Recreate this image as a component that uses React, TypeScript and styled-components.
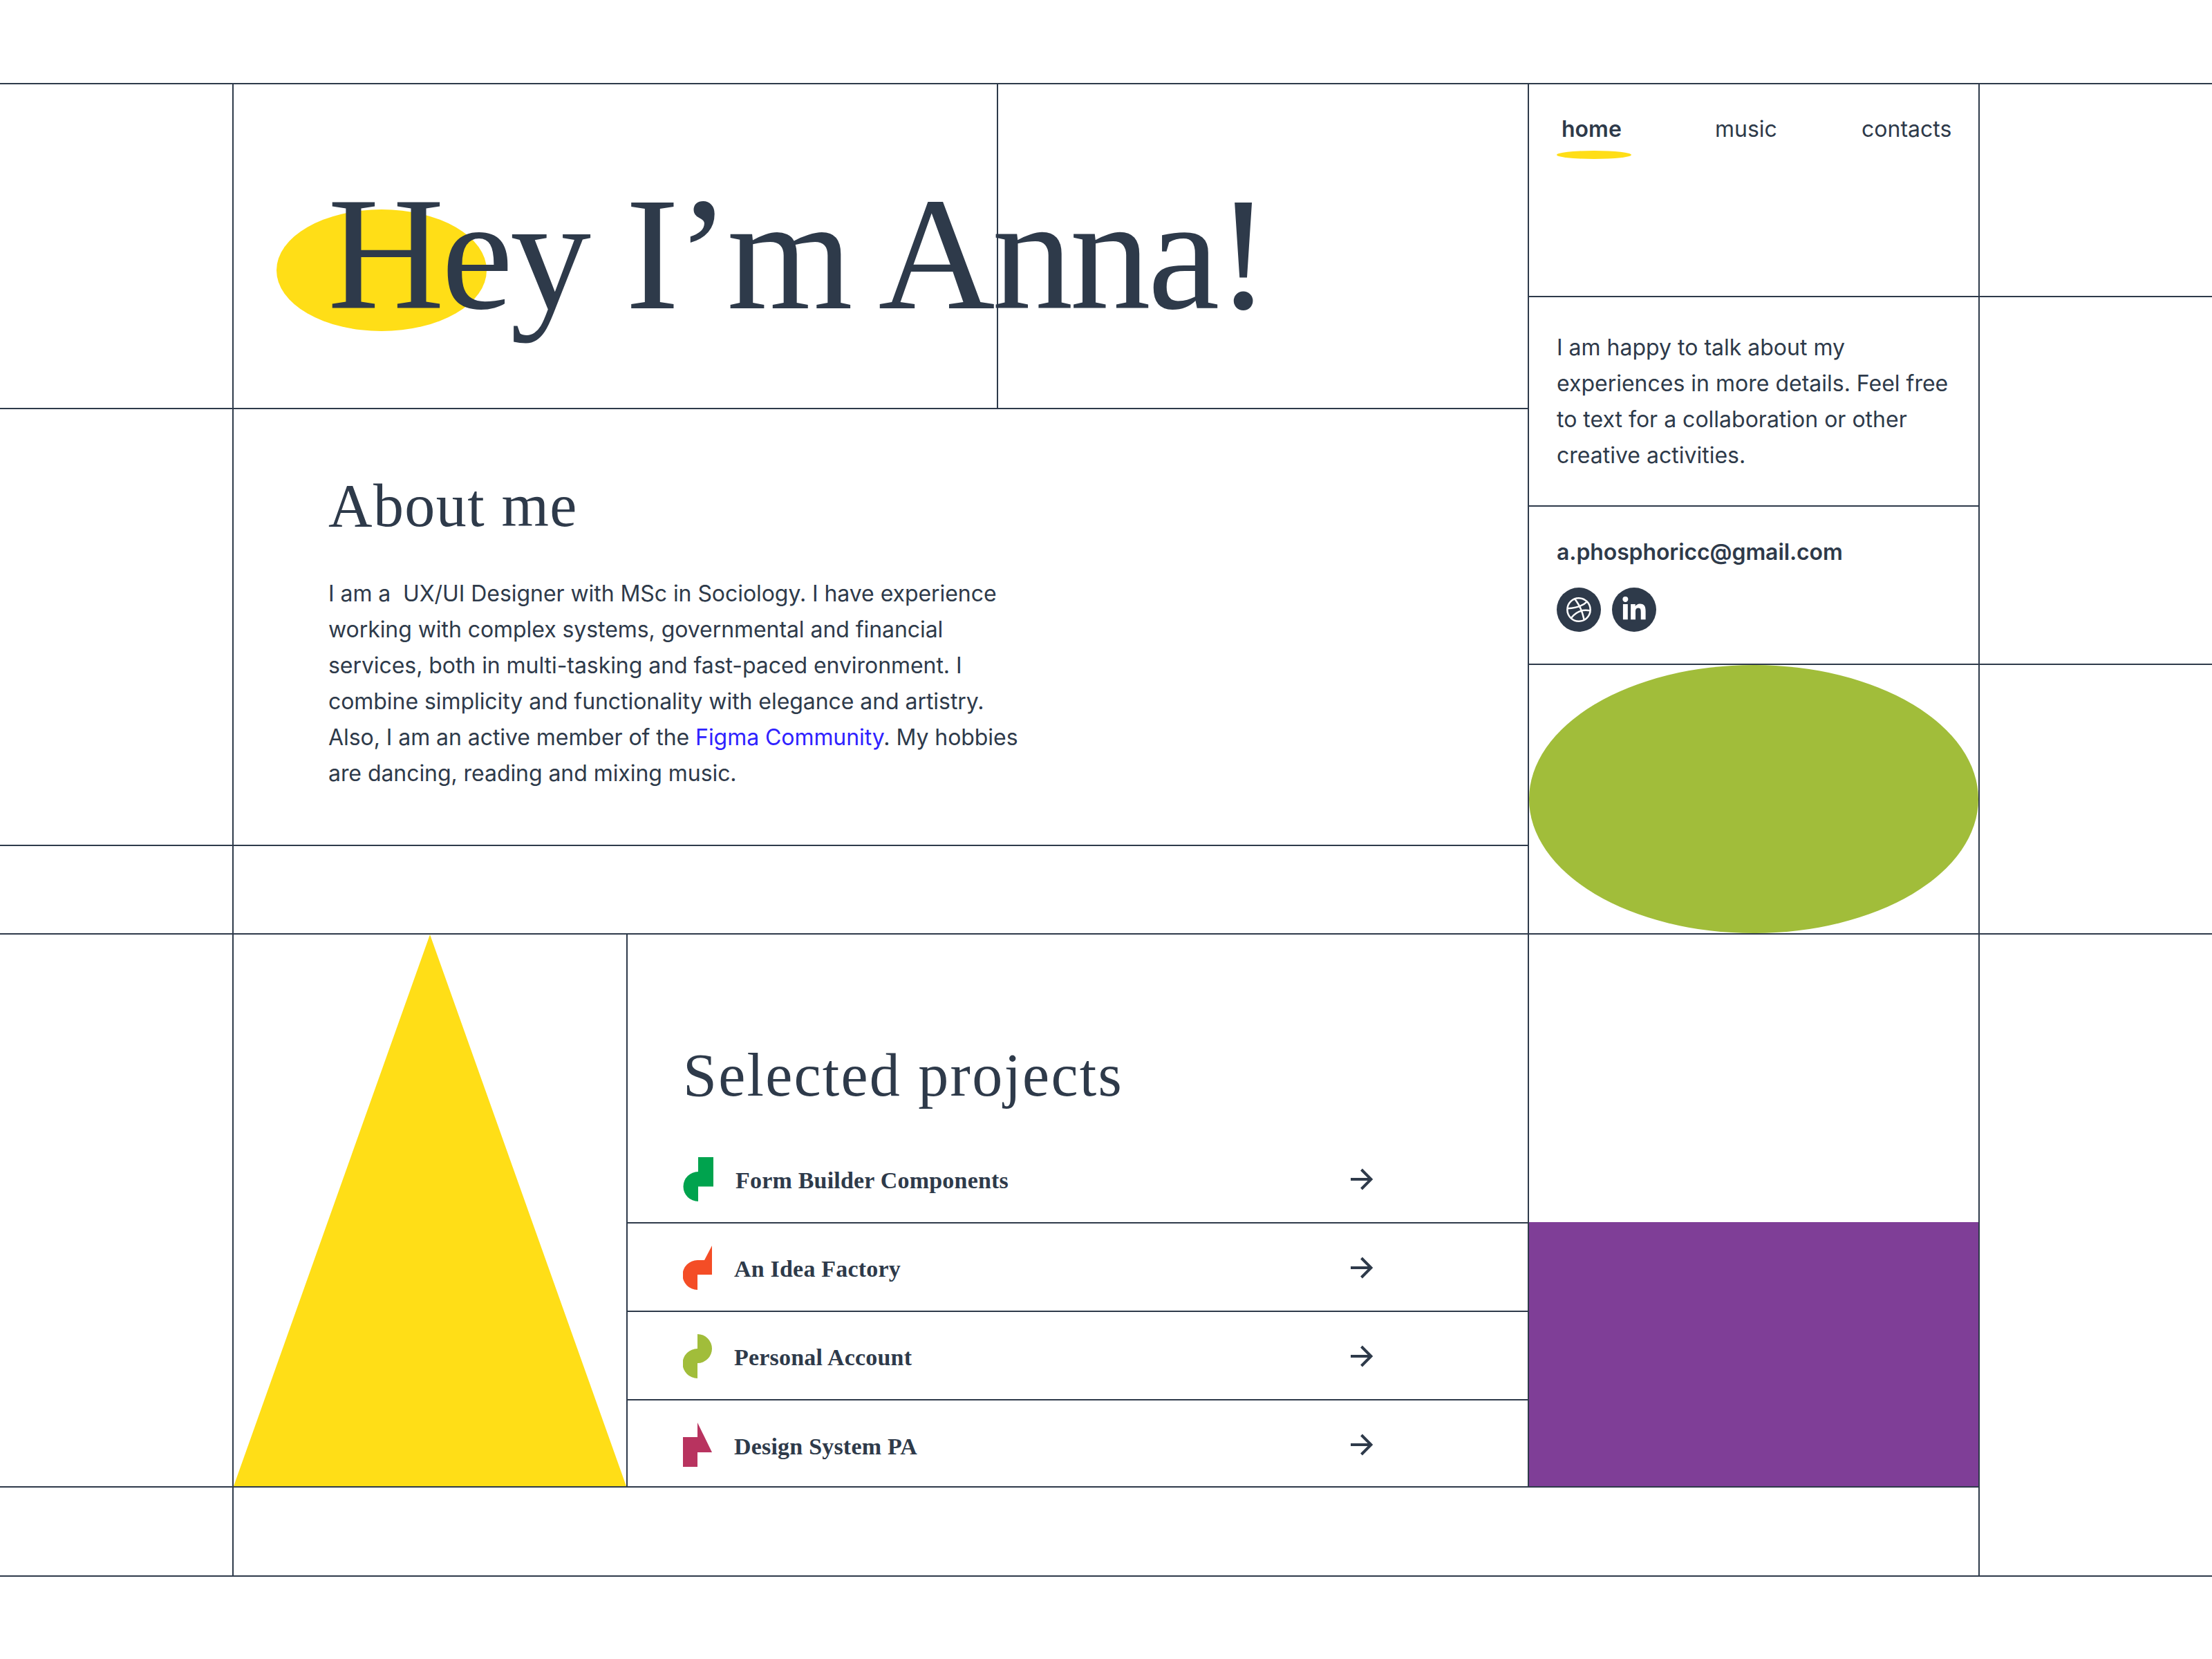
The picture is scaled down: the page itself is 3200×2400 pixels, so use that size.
import styled, { createGlobalStyle } from "styled-components";
import { FaLinkedinIn } from "react-icons/fa";

const INK = "#2e3a4a";
const YELLOW = "#ffde17";
const GREEN = "#a1bd3a";
const PURPLE = "#7f3e97";

const GlobalStyle = createGlobalStyle`
  html, body {
    margin: 0;
    padding: 0;
    background: #ffffff;
  }
  * {
    box-sizing: border-box;
  }
`;

const projects = [
  { name: "Form Builder Components", color: "#00a34e", w: 44, d: "M22 0H44V42.5H22V64A21.5 21.5 0 0 1 22 21Z" },
  { name: "An Idea Factory", color: "#f44d26", w: 42, d: "M42 0V42H21V64A21.5 21.5 0 0 1 21 21H31Z" },
  { name: "Personal Account", color: GREEN, w: 42, d: "M21 0A21 21 0 0 1 21 42V64A21.5 21.5 0 0 1 21 21Z" },
  { name: "Design System PA", color: "#b8335f", w: 42, d: "M21 0L42 43H21V64H0V21H21Z" },
];

const Arrow = () => (
  <ArrowSvg viewBox="0 0 32 32" fill="none" stroke={INK} strokeWidth="4">
    <path d="M0 16H29" />
    <path d="M15.5 2L29.5 16L15.5 30" />
  </ArrowSvg>
);

const App = () => {
  return (
    <Page>
      <GlobalStyle />
      <Frame>
        <LeftGutter>
          <GutterCell $h={470} />
          <GutterCell $h={632} />
          <GutterCell $h={128} />
          <GutterCell $h={800} />
        </LeftGutter>

        <Center>
          <Upper>
            <Main>
              <Hero>
                <HeroCell>
                  <HeroBlob />
                </HeroCell>
                <Title>Hey I’m Anna!</Title>
              </Hero>
              <About>
                <SectionTitle>About me</SectionTitle>
                <AboutText>
                  I am a{"\u00a0"} UX/UI Designer with MSc in Sociology. I have experience working with
                  complex systems, governmental and financial services, both in multi-tasking and
                  fast-paced environment. I combine simplicity and functionality with elegance and
                  artistry. Also, I am an active member of the <TextLink>Figma Community</TextLink>. My
                  hobbies are dancing, reading and mixing music.
                </AboutText>
              </About>
            </Main>

            <Side>
              <Nav>
                <NavItem $active>
                  home
                  <NavMark />
                </NavItem>
                <NavItem>music</NavItem>
                <NavItem>contacts</NavItem>
              </Nav>
              <Talk>
                I am happy to talk about my experiences in more details. Feel free to text for a
                collaboration or other creative activities.
              </Talk>
              <Contact>
                <Email>a.phosphoricc@gmail.com</Email>
                <Socials>
                  <Social>
                    <svg width="40" height="40" viewBox="0 0 24 24" fill="none" stroke="#fff" strokeWidth="1.5">
                      <circle cx="12" cy="12" r="10" />
                      <path d="M19.13 5.09C15.22 9.14 10 10.44 2.25 10.94" />
                      <path d="M21.75 12.84c-6.62-1.41-12.14 1-16.38 6.32" />
                      <path d="M8.56 2.75c4.37 6 6 9.42 8 17.72" />
                    </svg>
                  </Social>
                  <Social>
                    <FaLinkedinIn size={38} color="#fff" />
                  </Social>
                </Socials>
              </Contact>
              <GreenCell>
                <GreenOval />
              </GreenCell>
            </Side>
          </Upper>

          <Lower>
            <TriangleCell>
              <Triangle />
            </TriangleCell>

            <Projects>
              <ProjectsHead>
                <ProjectsTitle>Selected projects</ProjectsTitle>
              </ProjectsHead>
              {projects.map((p) => (
                <ProjectRow key={p.name}>
                  <svg width={p.w} height="64" viewBox={`0 0 ${p.w} 64`}>
                    <path d={p.d} fill={p.color} />
                  </svg>
                  <ProjectName>{p.name}</ProjectName>
                  <Arrow />
                </ProjectRow>
              ))}
            </Projects>

            <Aside>
              <PurpleBlock />
            </Aside>
          </Lower>
        </Center>

        <RightGutter>
          <GutterCell $h={308} />
          <GutterCell $h={532} />
          <GutterCell $h={390} />
        </RightGutter>
      </Frame>
    </Page>
  );
};

export default App;

const Page = styled.div`
  width: 3200px;
  height: 2400px;
  padding-top: 120px;
  overflow: hidden;
  color: ${INK};
  font-family: Inter, "Liberation Sans", sans-serif;
  font-size: 32px;
  line-height: 52px;
`;

const Frame = styled.div`
  display: flex;
  height: 2161px;
  border-top: 2px solid ${INK};
  border-bottom: 2px solid ${INK};
`;

const LeftGutter = styled.div`
  width: 336px;
  flex: none;
  display: flex;
  flex-direction: column;
`;

const RightGutter = styled.div`
  flex: 1;
  display: flex;
  flex-direction: column;
`;

const GutterCell = styled.div<{ $h: number }>`
  height: ${(p) => p.$h}px;
  border-bottom: 2px solid ${INK};
`;

const Center = styled.div`
  width: 2528px;
  flex: none;
  display: flex;
  flex-direction: column;
  border-left: 2px solid ${INK};
  border-right: 2px solid ${INK};
`;

const Upper = styled.div`
  height: 1230px;
  display: flex;
  border-bottom: 2px solid ${INK};
`;

const Main = styled.div`
  width: 1874px;
  border-right: 2px solid ${INK};
`;

const Hero = styled.div`
  height: 470px;
  display: grid;
  grid-template-columns: 1106px 1fr;
  border-bottom: 2px solid ${INK};
`;

const HeroCell = styled.div`
  grid-column: 1;
  grid-row: 1;
  position: relative;
  border-right: 2px solid ${INK};
`;

const HeroBlob = styled.div`
  position: absolute;
  left: 62px;
  top: 181px;
  width: 304px;
  height: 176px;
  border-radius: 50%;
  background: ${YELLOW};
`;

const Title = styled.h1`
  grid-column: 1 / -1;
  grid-row: 1;
  z-index: 1;
  margin: 0;
  padding: 128px 0 0 136px;
  font-family: "Liberation Serif", serif;
  font-weight: 400;
  font-size: 234px;
  line-height: 234px;
  letter-spacing: -4.4px;
  white-space: nowrap;
`;

const About = styled.section`
  height: 632px;
  padding: 96px 0 0 137px;
  border-bottom: 2px solid ${INK};
`;

const SectionTitle = styled.h2`
  margin: 0;
  font-family: "Liberation Serif", serif;
  font-weight: 400;
  font-size: 88px;
  line-height: 88px;
  letter-spacing: 1.4px;
`;

const ProjectsTitle = styled(SectionTitle)`
  letter-spacing: 2.25px;
`;

const AboutText = styled.p`
  width: 1005px;
  margin: 57px 0 0;
  letter-spacing: -0.06px;
`;

const TextLink = styled.span`
  color: #2f22ff;
`;

const Side = styled.div`
  flex: 1;
  display: flex;
  flex-direction: column;
`;

const Nav = styled.nav`
  height: 308px;
  display: grid;
  grid-template-columns: 222px 212px auto;
  align-content: start;
  padding: 39px 0 0 47px;
  border-bottom: 2px solid ${INK};
`;

const NavItem = styled.div<{ $active?: boolean }>`
  position: relative;
  font-weight: ${(p) => (p.$active ? 600 : 400)};
`;

const NavMark = styled.div`
  position: absolute;
  left: -7px;
  top: 57px;
  width: 108px;
  height: 12px;
  border-radius: 50%;
  background: ${YELLOW};
`;

const Talk = styled.div`
  height: 303px;
  padding: 47px 30px 0 40px;
  border-bottom: 2px solid ${INK};
`;

const Contact = styled.div`
  height: 229px;
  padding: 40px 0 0 40px;
  border-bottom: 2px solid ${INK};
`;

const Email = styled.div`
  font-weight: 600;
  letter-spacing: -0.1px;
`;

const Socials = styled.div`
  display: flex;
  gap: 16px;
  margin-top: 25px;
`;

const Social = styled.div`
  width: 64px;
  height: 64px;
  display: flex;
  align-items: center;
  justify-content: center;
  border-radius: 50%;
  background: ${INK};
`;

const GreenCell = styled.div`
  flex: 1;
  display: flex;
`;

const GreenOval = styled.div`
  flex: 1;
  border-radius: 50%;
  background: ${GREEN};
`;

const Lower = styled.div`
  height: 800px;
  display: flex;
  border-bottom: 2px solid ${INK};
`;

const TriangleCell = styled.div`
  width: 570px;
  display: flex;
  border-right: 2px solid ${INK};
`;

const Triangle = styled.div`
  flex: 1;
  background: ${YELLOW};
  clip-path: polygon(50% 0, 100% 100%, 0 100%);
`;

const Projects = styled.div`
  width: 1304px;
  border-right: 2px solid ${INK};
`;

const ProjectsHead = styled.div`
  height: 290px;
  padding: 160px 0 0 80px;
`;

const ProjectName = styled.div`
  flex: 1;
  margin-top: 3px;
  font-family: "Liberation Serif", serif;
  font-weight: 700;
  font-size: 34px;
  line-height: 44px;
  letter-spacing: 0.2px;
`;

const ProjectRow = styled.div`
  height: 128px;
  display: flex;
  align-items: center;
  gap: 32px;
  padding: 2px 224px 0 80px;
  border-bottom: 2px solid ${INK};

  &:last-child {
    height: 124px;
    padding-top: 4px;
    border-bottom: none;
  }

  &:last-child ${ProjectName} {
    margin-top: 5px;
  }
`;

const ArrowSvg = styled.svg`
  width: 32px;
  height: 32px;
  flex: none;
`;

const Aside = styled.div`
  flex: 1;
  display: flex;
  flex-direction: column;
  justify-content: flex-end;
`;

const PurpleBlock = styled.div`
  height: 382px;
  background: ${PURPLE};
`;
